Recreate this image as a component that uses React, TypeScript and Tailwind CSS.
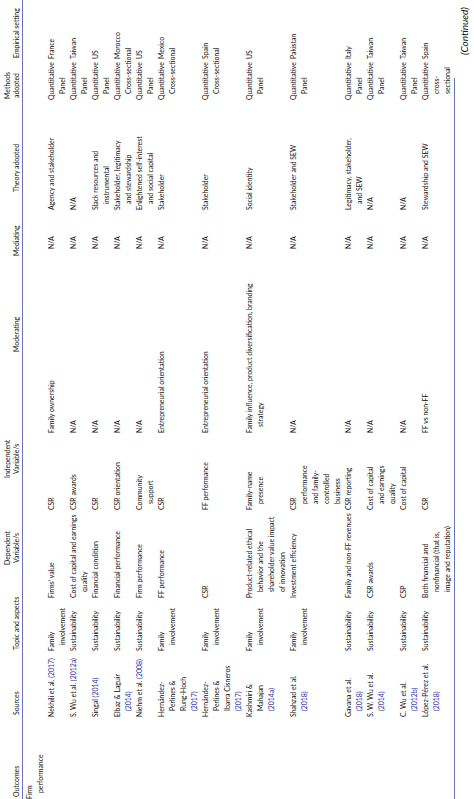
import React from "react";

type Cell = React.ReactNode[];

const Y = ({ children }: { children: React.ReactNode }) => (
  <span className="text-[#2a2ea0]">{children}</span>
);

const rows: Cell[][] = [
  [["Firm", "performance"], [], [], [], [], [], [], [], [], []],
  [
    [],
    [<>Nekhili et al. <Y>(2017)</Y></>],
    ["Family", "involvement"],
    ["Firms’ value"],
    ["CSR"],
    ["Family ownership"],
    ["N/A"],
    ["Agency and stakeholder"],
    ["Quantitative", "Panel"],
    ["France"],
  ],
  [
    [],
    [<>S. Wu et al. <Y>(2012a)</Y></>],
    ["Sustainability"],
    ["Cost of capital and earnings", "quality"],
    ["CSR awards"],
    ["N/A"],
    ["N/A"],
    ["N/A"],
    ["Quantitative", "Panel"],
    ["Taiwan"],
  ],
  [
    [],
    [<>Singal <Y>(2014)</Y></>],
    ["Sustainability"],
    ["Financial condition"],
    ["CSR"],
    ["N/A"],
    ["N/A"],
    ["Slack resources and", "instrumental"],
    ["Quantitative", "Panel"],
    ["US"],
  ],
  [
    [],
    ["Elbaz & Laguir", <Y>(2014)</Y>],
    ["Sustainability"],
    ["Financial performance"],
    ["CSR orientation"],
    ["N/A"],
    ["N/A"],
    ["Stakeholder, legitimacy", "and stewardship"],
    ["Quantitative", "Cross-sectional"],
    ["Morocco"],
  ],
  [
    [],
    [<>Niehm et al. <Y>(2008)</Y></>],
    ["Sustainability"],
    ["Firm performance"],
    ["Community", "support"],
    ["N/A"],
    ["N/A"],
    ["Enlightened self-interest", "and social capital"],
    ["Quantitative", "Panel"],
    ["US"],
  ],
  [
    [],
    ["Hernández-", "Perlines &", "Rung-Hoch", <Y>(2017)</Y>],
    ["Family", "involvement"],
    ["FF performance"],
    ["CSR"],
    ["Entrepreneurial orientation"],
    ["N/A"],
    ["Stakeholder"],
    ["Quantitative", "Cross-sectional"],
    ["Mexico"],
  ],
  [
    [],
    ["Hernández-", "Perlines &", "Ibarra Cisneros", <Y>(2017)</Y>],
    ["Family", "involvement"],
    ["CSR"],
    ["FF performance"],
    ["Entrepreneurial orientation"],
    ["N/A"],
    ["Stakeholder"],
    ["Quantitative", "Cross-sectional"],
    ["Spain"],
  ],
  [
    [],
    ["Kashmiri &", "Mahajan", <Y>(2014a)</Y>],
    ["Family", "involvement"],
    ["Product-related ethical", "behavior and the", "shareholder value impact", "of innovation"],
    ["Family-name", "presence"],
    ["Family influence, product diversification, branding", "strategy"],
    ["N/A"],
    ["Social identity"],
    ["Quantitative", "Panel"],
    ["US"],
  ],
  [
    [],
    ["Shahzad et al.", <Y>(2018)</Y>],
    ["Family", "involvement"],
    ["Investment efficiency"],
    ["CSR", "performance", "and family-", "controlled", "business"],
    ["N/A"],
    ["N/A"],
    ["Stakeholder and SEW"],
    ["Quantitative", "Panel"],
    ["Pakistan"],
  ],
  [
    [],
    ["Gavana et al.", <Y>(2018)</Y>],
    ["Sustainability"],
    ["Family and non-FF revenues"],
    ["CSR reporting"],
    ["N/A"],
    ["N/A"],
    ["Legitimacy, stakeholder,", "and SEW"],
    ["Quantitative", "Panel"],
    ["Italy"],
  ],
  [
    [],
    ["S. W. Wu et al.", <Y>(2014)</Y>],
    ["Sustainability"],
    ["CSR awards"],
    ["Cost of capital", "and earnings", "quality"],
    ["N/A"],
    ["N/A"],
    ["N/A"],
    ["Quantitative", "Panel"],
    ["Taiwan"],
  ],
  [
    [],
    ["C. Wu et al.", <Y>(2012b)</Y>],
    ["Sustainability"],
    ["CSP"],
    ["Cost of capital"],
    ["N/A"],
    ["N/A"],
    ["N/A"],
    ["Quantitative", "Panel"],
    ["Taiwan"],
  ],
  [
    [],
    ["López-Pérez et al.", <Y>(2018)</Y>],
    ["Sustainability"],
    ["Both financial and", "nonfinancial (that is,", "image and reputation)"],
    ["CSR"],
    ["FF vs non-FF"],
    ["N/A"],
    ["Stewardship and SEW"],
    ["Quantitative", "cross-", "sectional"],
    ["Spain"],
  ],
];

const gridCols =
  "grid grid-cols-[82px_66px_53px_88px_77px_184px_39px_110px_41px_59px]";

function CellView({ lines }: { lines: Cell }) {
  return (
    <div className="pl-[6px] indent-[-6px] whitespace-nowrap">
      {lines.map((l, i) => (
        <React.Fragment key={i}>
          {i > 0 && <br />}
          {l}
        </React.Fragment>
      ))}
    </div>
  );
}

export default function App() {
  return (
    <div className="w-[474px] h-[799px] overflow-hidden bg-white">
      <div className="w-[799px] h-[474px] origin-top-left -rotate-90 translate-y-[799px] text-[#111111] font-[family-name:Lato,sans-serif] text-[6.9px]">
        {/* header */}
        <div className={`${gridCols} h-[22px] items-end pb-[1px] leading-[9px] whitespace-nowrap`}>
          <div className="pl-[2px]">Outcomes</div>
          <div className="pl-[2px]">Sources</div>
          <div className="pl-[1px]">Topic and aspects</div>
          <div className="pl-[33px]">
            <div className="inline-block text-center">
              Dependent
              <br />
              Variable/s
            </div>
          </div>
          <div className="pl-[32px]">
            <div className="inline-block text-center">
              Independent
              <br />
              Variable/s
            </div>
          </div>
          <div className="pl-[81px]">Moderating</div>
          <div className="-ml-[7px]">Mediating</div>
          <div className="pl-[18px]">Theory adopted</div>
          <div className="pl-[1px]">
            <div className="inline-block text-center">
              Methods
              <br />
              adopted
            </div>
          </div>
          <div className="pl-[1px]">Empirical setting</div>
        </div>
        <div className="h-px bg-[#6f72bd]" />
        {/* body */}
        <div className="pt-[1px] leading-[11px]">
          {rows.map((r, i) => (
            <div key={i} className={gridCols}>
              {r.map((c, j) => (
                <CellView key={j} lines={c} />
              ))}
            </div>
          ))}
        </div>
        <div className="h-px w-[721px] bg-[#6f72bd] mt-[1px]" />
        <div className="pl-[744px] pt-[3px] text-[10px] italic leading-[12px] whitespace-nowrap">
          (Continued)
        </div>
      </div>
    </div>
  );
}
